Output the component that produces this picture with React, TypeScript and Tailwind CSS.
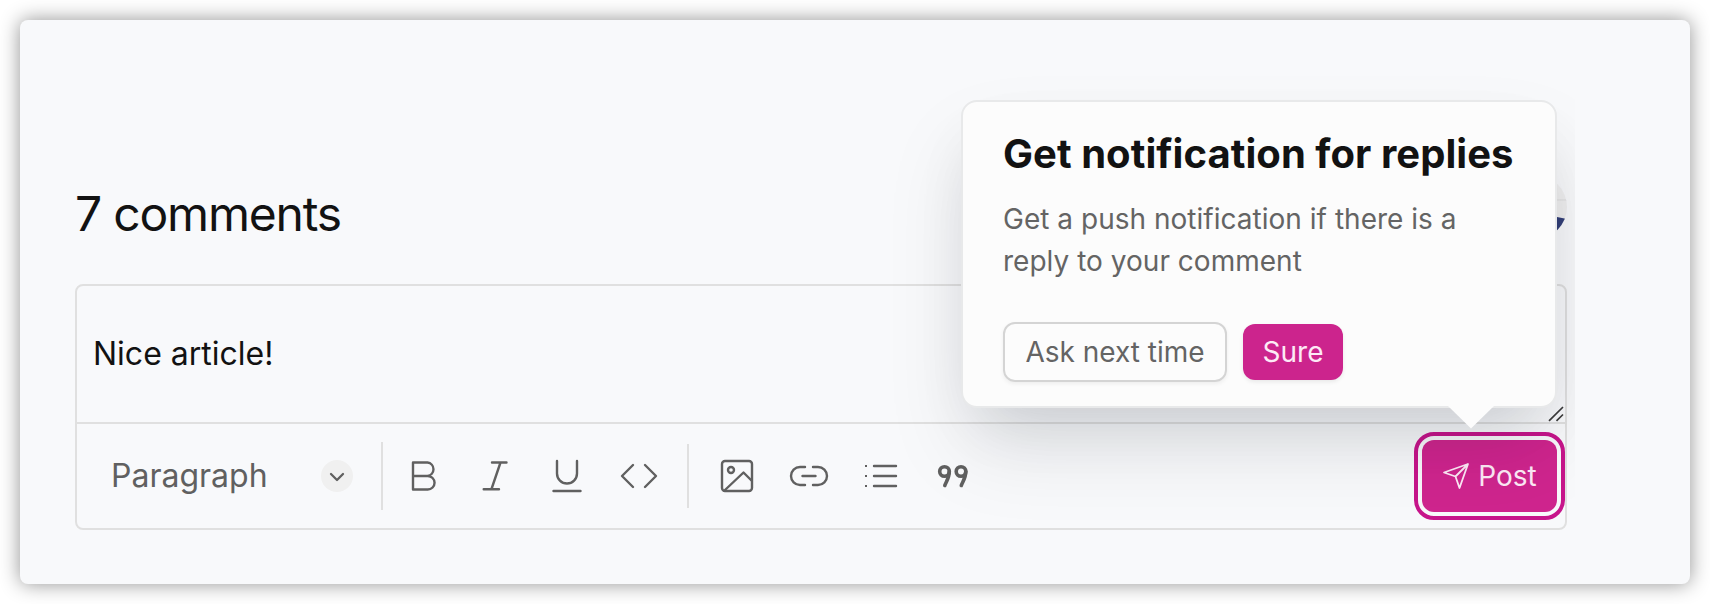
import type { ReactNode } from 'react';

function Icon({ children, className = '', size = 44 }: { children: ReactNode; className?: string; size?: number }) {
  return (
    <svg width={size} height={size} viewBox={`0 0 ${size} ${size}`} fill="none" stroke="currentColor" strokeWidth={2.4} strokeLinecap="round" strokeLinejoin="round" className={`shrink-0 ${className}`}>
      {children}
    </svg>
  );
}

function Toolbar() {
  return (
    <div className="flex h-[104px] items-center text-[#606060]">
      <button className="flex h-17 w-[304px] items-center justify-between pr-[28px] pl-[34px]">
        <span className="text-[32px] leading-[48px]">Paragraph</span>
        <span className="flex size-8 items-center justify-center rounded-full bg-[#f0f0f0]">
          <svg width="16" height="16" viewBox="0 0 16 16" fill="none" stroke="currentColor" strokeWidth="2.3" strokeLinecap="round" strokeLinejoin="round">
            <path d="M2 6l6 6 6-6" />
          </svg>
        </span>
      </button>
      <div className="h-17 w-0.5 bg-[#e0e0e0]" />
      <div className="flex w-[304px] items-center gap-7 pl-[18px]">
        <Icon>
          <path d="M12 8.500h14.500a6.800 6.800 0 0 1 0 13.500H12zM26.800 22a6.700 6.700 0 0 1 0 13.500H12V22" />
        </Icon>
        <Icon>
          <path d="M19 8.500h14.500M10.700 35.200h15.300M27.500 8.500L18.500 35" />
        </Icon>
        <Icon>
          <path d="M12 7v12.500a10 10 0 0 0 20 0V7M8.500 37h27" />
        </Icon>
        <Icon>
          <path d="M16 11L5 22l11 11M28 11l11 11-11 11" />
        </Icon>
      </div>
      <div className="h-16 w-0.5 bg-[#e0e0e0]" />
      <div className="flex grow items-center gap-7 pl-[26px]">
        <Icon>
          <rect x="7" y="7" width="30" height="30" rx="3" />
          <circle cx="16" cy="16" r="3" />
          <path d="M10 36l18.500-17.500 8 8" />
        </Icon>
        <Icon>
          <path d="M18 13h-5a9 9 0 0 0 0 18h5M26 13h5a9 9 0 0 1 0 18h-5M15.500 22h13" />
        </Icon>
        <Icon>
          <path d="M15 12h22M15 22h22M15 32h22" />
          <path d="M6 11h2v2h-2zM6 21h2v2h-2zM6 31h2v2h-2z" fill="currentColor" stroke="none" />
        </Icon>
        <Icon className="[stroke-width:3.6]">
          <circle cx="13.500" cy="17.500" r="4.800" />
          <circle cx="30" cy="17.500" r="4.800" />
          <path d="M18.300 17.500c0 6-2.500 9-4.500 14M34.800 17.500c0 6-2.500 9-4.500 14" />
        </Icon>
      </div>
      <button className="mr-[8px] flex h-18 w-[135px] items-center justify-center gap-2 rounded-xl bg-[#cf258e] text-[28px] leading-10 text-[#fdeaf6] outline-4 outline-offset-4 outline-[#c7158b]">
        <svg width="28" height="28" viewBox="0 0 28 28" fill="none" stroke="currentColor" strokeWidth="1.8" strokeLinejoin="round">
          <path d="M26 2L2 10.500l11.500 4L17.500 26zM26 2L13.500 14.500" />
        </svg>
        <span>Post</span>
      </button>
    </div>
  );
}

function NotificationPopover() {
  return (
    <div className="absolute top-[80px] left-[941px] h-[308px] w-[596px] [clip-path:inset(-80px_-18px_-129px_-82px)]">
      <div className="flex h-full flex-col rounded-2xl border-2 border-[#e8e9ea] bg-[#fcfcfc] pt-[30px] pl-10 shadow-[0_44px_84px_-4px_rgba(14,18,28,0.1),0_28px_60px_-22px_rgba(14,18,28,0.13)]">
        <h2 className="text-[40px] leading-[44px] font-bold tracking-[0.05px] whitespace-nowrap text-[#121212]">Get notification for replies</h2>
        <p className="mt-[22px] w-[480px] text-[28px] leading-[42px] tracking-[0.02px] text-[#646464]">
          Get a push notification if there is a<br />reply to your comment
        </p>
        <div className="mt-[40px] flex items-center gap-4 text-[28px] leading-10">
          <button className="h-15 w-56 rounded-xl border-2 border-[#d4d4d4] text-[#646464] shadow-[0_2px_4px_rgba(0,0,0,0.06)]">Ask next time</button>
          <button className="h-14 w-25 rounded-xl bg-[#cc248d] text-[#fdeaf6] shadow-[0_2px_4px_rgba(0,0,0,0.08)]">Sure</button>
        </div>
      </div>
      <svg width="46" height="23" viewBox="0 0 46 23" className="absolute top-[306px] left-[487px] fill-[#fcfcfc]">
        <path d="M0 0h46L23 22.500z" />
      </svg>
    </div>
  );
}

export default function App() {
  return (
    <div className="h-[604px] w-[1710px] bg-white p-5 font-['Inter',sans-serif]">
      <main className="relative flex h-[564px] flex-col rounded-lg bg-[#f8f9fb] pr-[123px] pl-[55px] pt-[155px] shadow-[0_0_20px_rgba(0,0,0,0.43)]">
        <header className="flex h-16 items-center justify-between">
          <h1 className="pt-[14px] text-[48px] leading-[60px] tracking-[-1.2px] text-[#121212]">7 comments</h1>
          <svg width="64" height="64" viewBox="0 0 64 64" className="rounded-full">
            <path d="M0 0h64v64H0z" fill="#f0f0f0" />
            <path d="M0 25h64" stroke="#dddddd" />
            <path d="M0 42h54l10 2v20H0z" fill="#344078" />
          </svg>
        </header>
        <section className="mt-[45px] h-[246px] rounded-lg border-2 border-[#e0e0e0]">
          <div className="flex h-[138px] justify-between border-b-2 border-[#e0e0e0] pl-4">
            <p className="pt-[44px] text-[32px] leading-[48px] text-[#121212]">Nice article!</p>
            <svg width="16" height="16" viewBox="0 0 16 16" className="mr-px self-end" fill="none" stroke="#3c3c3c" strokeWidth="1.700">
              <path d="M1 14.800L15 1M8.500 14.800L15 8.500" />
            </svg>
          </div>
          <Toolbar />
        </section>
        <NotificationPopover />
      </main>
    </div>
  );
}
